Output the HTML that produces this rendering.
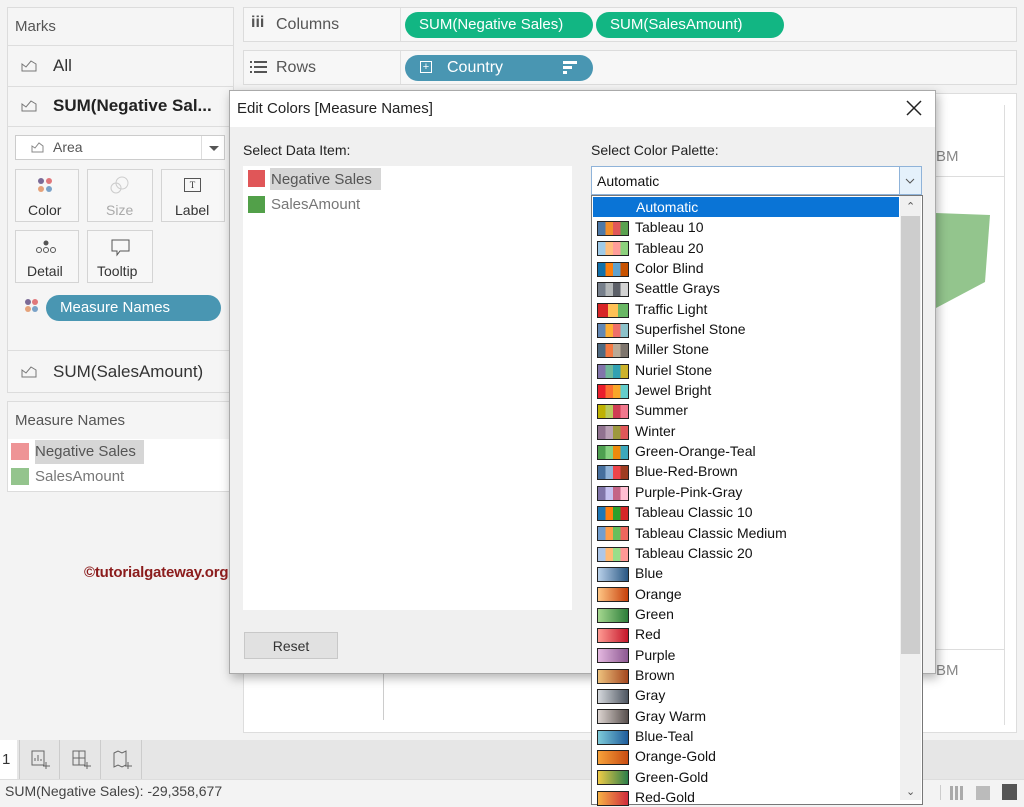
<!DOCTYPE html>
<html><head><meta charset="utf-8"><style>
*{box-sizing:border-box;margin:0;padding:0}
body{width:1024px;height:800px;overflow:hidden;background:#f3f3f3;font-family:"Liberation Sans",sans-serif;color:#333;position:relative}
.a{position:absolute}
.panel{background:#f5f5f5;border:1px solid #dcdcdc}
.pill{position:absolute;border-radius:13px;color:#fff;font-size:15px;line-height:26px;padding-left:14px}
.btn{position:absolute;background:#f7f7f7;border:1px solid #d4d4d4;text-align:center;font-size:14px;color:#333}
.sw{display:inline-block;width:32px;height:15px;border:1px solid #222;vertical-align:middle;margin:0 6px 0 4px}
.row{height:20.35px;line-height:20.35px;font-size:14px;color:#111;white-space:nowrap}
</style></head><body>
<div class="a panel" style="left:7px;top:7px;width:227px;height:386px"></div>
<div class="a" style="left:15px;top:18px;font-size:15px;color:#555">Marks</div>
<div class="a" style="left:7px;top:45px;width:227px;height:1px;background:#ddd"></div>
<div class="a" style="left:7px;top:86px;width:227px;height:1px;background:#ddd"></div>
<div class="a" style="left:7px;top:126px;width:227px;height:1px;background:#ddd"></div>
<div class="a" style="left:7px;top:350px;width:227px;height:1px;background:#ddd"></div>
<svg class="a" style="left:21px;top:58px" width="18" height="14"><path d="M1 13V6l4 3 5-6 5 3v7z" fill="none" stroke="#777"/></svg>
<div class="a" style="left:53px;top:56px;font-size:17px;color:#333">All</div>
<svg class="a" style="left:21px;top:98px" width="18" height="14"><path d="M1 13V6l4 3 5-6 5 3v7z" fill="none" stroke="#777"/></svg>
<div class="a" style="left:53px;top:96px;font-size:17px;font-weight:bold;color:#222">SUM(Negative Sal...</div>
<div class="a" style="left:15px;top:135px;width:210px;height:25px;background:#fff;border:1px solid #ccc"></div>
<svg class="a" style="left:31px;top:141px" width="14" height="12"><path d="M1 11V5l3 2 4-5 4 3v6z" fill="none" stroke="#888"/></svg>
<div class="a" style="left:53px;top:139px;font-size:14px;color:#555">Area</div>
<div class="a" style="left:201px;top:136px;width:1px;height:23px;background:#ddd"></div>
<div class="a" style="left:209px;top:146px;border:5px solid transparent;border-top-color:#555;border-bottom:0"></div>
<div class="btn" style="left:15px;top:169px;width:64px;height:53px"></div>
<div class="btn" style="left:87px;top:169px;width:66px;height:53px"></div>
<div class="btn" style="left:161px;top:169px;width:64px;height:53px"></div>
<div class="btn" style="left:15px;top:230px;width:64px;height:53px"></div>
<div class="btn" style="left:87px;top:230px;width:66px;height:53px"></div>
<svg class="a" style="left:37px;top:177px" width="18" height="18"><circle cx="4" cy="4" r="3" fill="#7b6a96"/><circle cx="12" cy="4" r="3" fill="#e0777b"/><circle cx="4" cy="12" r="3" fill="#e5a27a"/><circle cx="12" cy="12" r="3" fill="#7aa2c8"/></svg>
<div class="a" style="left:28px;top:202px;font-size:14px">Color</div>
<svg class="a" style="left:110px;top:176px" width="20" height="18"><circle cx="12" cy="7" r="6" fill="none" stroke="#ccc"/><circle cx="6" cy="12" r="5" fill="none" stroke="#ccc"/></svg>
<div class="a" style="left:106px;top:202px;font-size:14px;color:#aaa">Size</div>
<div class="a" style="left:184px;top:178px;width:17px;height:14px;border:1px solid #555;font-size:9px;text-align:center;line-height:12px;font-family:'Liberation Serif',serif">T</div>
<div class="a" style="left:175px;top:202px;font-size:14px">Label</div>
<svg class="a" style="left:35px;top:240px" width="22" height="14"><circle cx="11" cy="3" r="2.5" fill="#555"/><circle cx="4" cy="10" r="2.5" fill="none" stroke="#555"/><circle cx="11" cy="10" r="2.5" fill="none" stroke="#555"/><circle cx="18" cy="10" r="2.5" fill="none" stroke="#555"/></svg>
<div class="a" style="left:27px;top:263px;font-size:14px">Detail</div>
<svg class="a" style="left:111px;top:239px" width="20" height="18"><path d="M1 1h17v11H9l-3 4v-4H1z" fill="none" stroke="#555"/></svg>
<div class="a" style="left:97px;top:263px;font-size:14px">Tooltip</div>
<svg class="a" style="left:24px;top:298px" width="16" height="16"><circle cx="4" cy="4" r="3" fill="#7b6a96"/><circle cx="11" cy="4" r="3" fill="#e0777b"/><circle cx="4" cy="11" r="3" fill="#e5a27a"/><circle cx="11" cy="11" r="3" fill="#7aa2c8"/></svg>
<div class="pill" style="left:46px;top:295px;width:175px;background:#4996b2;font-size:15px">Measure Names</div>
<svg class="a" style="left:21px;top:364px" width="18" height="14"><path d="M1 13V6l4 3 5-6 5 3v7z" fill="none" stroke="#777"/></svg>
<div class="a" style="left:53px;top:362px;font-size:17px;color:#333">SUM(SalesAmount)</div>
<div class="a panel" style="left:7px;top:401px;width:227px;height:91px"></div>
<div class="a" style="left:15px;top:412px;font-size:15px;color:#555">Measure Names</div>
<div class="a" style="left:8px;top:439px;width:225px;height:52px;background:#fff"></div>
<div class="a" style="left:11px;top:443px;width:18px;height:17px;background:#ee9496"></div>
<div class="a" style="left:35px;top:440px;width:109px;height:24px;background:#d6d6d6"></div>
<div class="a" style="left:35px;top:443px;font-size:15px;color:#555">Negative Sales</div>
<div class="a" style="left:11px;top:468px;width:18px;height:17px;background:#94c48d"></div>
<div class="a" style="left:35px;top:468px;font-size:15px;color:#777">SalesAmount</div>
<div class="a panel" style="left:243px;top:7px;width:774px;height:35px;background:#f7f7f7"></div>
<div class="a" style="left:400px;top:8px;width:1px;height:33px;background:#e0e0e0"></div>
<div class="a" style="left:251px;top:14px;font-size:16px;font-weight:bold;color:#555">iii</div>
<div class="a" style="left:276px;top:16px;font-size:16px;color:#555">Columns</div>
<div class="pill" style="left:405px;top:12px;width:188px;background:#12b683;font-size:15px">SUM(Negative Sales)</div>
<div class="pill" style="left:596px;top:12px;width:188px;background:#12b683;font-size:15px">SUM(SalesAmount)</div>
<div class="a panel" style="left:243px;top:50px;width:774px;height:35px;background:#f7f7f7"></div>
<div class="a" style="left:400px;top:51px;width:1px;height:33px;background:#e0e0e0"></div>
<svg class="a" style="left:250px;top:60px" width="18" height="14"><g fill="#555"><rect x="0" y="1" width="2" height="2"/><rect x="0" y="6" width="2" height="2"/><rect x="0" y="11" width="2" height="2"/><rect x="4" y="1" width="13" height="2"/><rect x="4" y="6" width="13" height="2"/><rect x="4" y="11" width="13" height="2"/></g></svg>
<div class="a" style="left:276px;top:59px;font-size:16px;color:#555">Rows</div>
<div class="pill" style="left:405px;top:55px;width:188px;background:#4996b2;font-size:16px;padding-left:42px">Country</div>
<div class="a" style="left:420px;top:61px;width:12px;height:12px;border:1px solid #fff;color:#fff;font-size:11px;line-height:10px;text-align:center">+</div>
<svg class="a" style="left:563px;top:60px" width="16" height="16"><g fill="#fff"><rect x="0" y="1" width="14" height="3"/><rect x="0" y="6" width="9" height="3"/><rect x="0" y="11" width="4" height="3"/></g></svg>
<div class="a" style="left:243px;top:93px;width:774px;height:640px;background:#fff;border:1px solid #ddd"></div>
<div class="a" style="left:383px;top:650px;width:1px;height:70px;background:#ccc"></div>
<div class="a" style="left:1004px;top:105px;width:1px;height:620px;background:#ddd"></div>
<div class="a" style="left:936px;top:176px;width:68px;height:1px;background:#ddd"></div>
<div class="a" style="left:936px;top:649px;width:68px;height:1px;background:#ddd"></div>
<div class="a" style="left:936px;top:148px;font-size:15px;color:#888">BM</div>
<div class="a" style="left:936px;top:662px;font-size:15px;color:#888">BM</div>
<svg class="a" style="left:936px;top:210px" width="60" height="110"><path d="M0 3L54 5 49 72 0 98z" fill="#93c58d"/></svg>
<div class="a" style="left:0;top:740px;width:1024px;height:39px;background:#e6e6e6"></div>
<div class="a" style="left:0;top:740px;width:17px;height:39px;background:#fff;font-size:15px;line-height:39px;padding-left:2px">1</div>
<div class="a" style="left:19px;top:740px;width:1px;height:39px;background:#ccc"></div>
<div class="a" style="left:59px;top:740px;width:1px;height:39px;background:#ccc"></div>
<div class="a" style="left:100px;top:740px;width:1px;height:39px;background:#ccc"></div>
<div class="a" style="left:141px;top:740px;width:1px;height:39px;background:#ccc"></div>
<svg class="a" style="left:31px;top:750px" width="20" height="20"><path d="M1 1h12v14H1z M4 11V8M7 11V5M10 11V9" fill="none" stroke="#666"/><path d="M15 12v7M12 16h7" stroke="#666"/></svg>
<svg class="a" style="left:72px;top:750px" width="20" height="20"><path d="M1 1h12v14H1zM1 8h12M7 1v14" fill="none" stroke="#666"/><path d="M15 12v7M12 16h7" stroke="#666"/></svg>
<svg class="a" style="left:113px;top:750px" width="20" height="20"><path d="M1 3l4-2 4 2 4-2v14l-4 2-4-2-4 2z" fill="none" stroke="#666"/><path d="M15 12v7M12 16h7" stroke="#666"/></svg>
<div class="a" style="left:0;top:779px;width:1024px;height:21px;background:#f3f3f3;border-top:1px solid #ddd"></div>
<div class="a" style="left:5px;top:783px;font-size:14px;color:#444">SUM(Negative Sales): -29,358,677</div>
<div class="a" style="left:940px;top:785px;width:1px;height:15px;background:#ccc"></div>
<div class="a" style="left:950px;top:786px;width:14px;height:14px;background:repeating-linear-gradient(90deg,#aaa 0 3px,transparent 3px 5px)"></div>
<div class="a" style="left:976px;top:786px;width:14px;height:14px;background:#bbb"></div>
<div class="a" style="left:1002px;top:784px;width:15px;height:16px;background:#555"></div>
<div class="a" style="left:229px;top:90px;width:707px;height:584px;background:#f0f0f0;border:1px solid #aaa;box-shadow:2px 4px 10px rgba(0,0,0,.3)"></div>
<div class="a" style="left:230px;top:91px;width:705px;height:36px;background:#fff"></div>
<div class="a" style="left:237px;top:100px;font-size:15px;color:#222">Edit Colors [Measure Names]</div>
<svg class="a" style="left:906px;top:100px" width="16" height="16"><path d="M1 1l14 14M15 1L1 15" stroke="#222" stroke-width="1.5"/></svg>
<div class="a" style="left:243px;top:142px;font-size:14px;color:#222">Select Data Item:</div>
<div class="a" style="left:243px;top:166px;width:329px;height:444px;background:#fff"></div>
<div class="a" style="left:248px;top:170px;width:17px;height:17px;background:#e05658"></div>
<div class="a" style="left:270px;top:168px;width:111px;height:22px;background:#d6d6d6"></div>
<div class="a" style="left:271px;top:171px;font-size:15px;color:#555">Negative Sales</div>
<div class="a" style="left:248px;top:196px;width:17px;height:17px;background:#52a049"></div>
<div class="a" style="left:271px;top:196px;font-size:15px;color:#777">SalesAmount</div>
<div class="btn" style="left:244px;top:632px;width:94px;height:27px;background:#e1e1e1;border-color:#c8c8c8;line-height:26px">Reset</div>
<div class="a" style="left:84px;top:564px;font-size:15px;font-weight:bold;color:#8b1c1c;z-index:5;letter-spacing:-0.2px">©tutorialgateway.org</div>
<div class="a" style="left:591px;top:142px;font-size:14px;color:#222">Select Color Palette:</div>
<div class="a" style="left:591px;top:166px;width:331px;height:29px;background:#fff;border:1px solid #8fb3d9"></div>
<div class="a" style="left:597px;top:173px;font-size:14px;color:#111">Automatic</div>
<div class="a" style="left:899px;top:167px;width:22px;height:27px;background:#e5f1fb;border-left:1px solid #8fb3d9"></div>
<svg class="a" style="left:905px;top:177px" width="10" height="8"><path d="M1 2l4 4 4-4" fill="none" stroke="#555"/></svg>
<div class="a" style="left:591px;top:195px;width:332px;height:610px;background:#fff;border:1px solid #777"></div>
<div class="a" style="left:900px;top:196px;width:21px;height:604px;background:#f0f0f0"></div>
<div class="a" style="left:901px;top:216px;width:19px;height:438px;background:#cdcdcd"></div>
<div class="a" style="left:906px;top:200px;font-size:11px;color:#555">&#8963;</div>
<div class="a" style="left:906px;top:785px;font-size:11px;color:#555">&#8964;</div>
<div class="a" style="left:593px;top:197px;width:306px">
<div class="row" style="background:#0a74d6;color:#fff;padding-left:43px">Automatic</div>
<div class="row"><span class="sw" style="background:linear-gradient(90deg,#4e79a7 0 25%,#f28e2b 25% 50%,#e15759 50% 75%,#59a14f 75%)"></span>Tableau 10</div>
<div class="row"><span class="sw" style="background:linear-gradient(90deg,#a0cbe8 0 25%,#ffbe7d 25% 50%,#ff9d9a 50% 75%,#8cd17d 75%)"></span>Tableau 20</div>
<div class="row"><span class="sw" style="background:linear-gradient(90deg,#1170aa 0 25%,#fc7d0b 25% 50%,#5fa2ce 50% 75%,#c85200 75%)"></span>Color Blind</div>
<div class="row"><span class="sw" style="background:linear-gradient(90deg,#767f8b 0 25%,#b3b7b8 25% 50%,#5c6068 50% 75%,#d3d3d3 75%)"></span>Seattle Grays</div>
<div class="row"><span class="sw" style="background:linear-gradient(90deg,#d82526 0 33%,#ffc156 33% 66%,#69b764 66%)"></span>Traffic Light</div>
<div class="row"><span class="sw" style="background:linear-gradient(90deg,#6388b4 0 25%,#ffae34 25% 50%,#ef6f6a 50% 75%,#8cc2ca 75%)"></span>Superfishel Stone</div>
<div class="row"><span class="sw" style="background:linear-gradient(90deg,#4f6980 0 25%,#f47942 25% 50%,#b9aa97 50% 75%,#7e756d 75%)"></span>Miller Stone</div>
<div class="row"><span class="sw" style="background:linear-gradient(90deg,#8175aa 0 25%,#6fb899 25% 50%,#31a1b3 50% 75%,#ccb22b 75%)"></span>Nuriel Stone</div>
<div class="row"><span class="sw" style="background:linear-gradient(90deg,#eb1e2c 0 25%,#fd6f30 25% 50%,#f9a729 50% 75%,#64cdcc 75%)"></span>Jewel Bright</div>
<div class="row"><span class="sw" style="background:linear-gradient(90deg,#bfb202 0 25%,#b9ca5d 25% 50%,#cf3e53 50% 75%,#f1788d 75%)"></span>Summer</div>
<div class="row"><span class="sw" style="background:linear-gradient(90deg,#90728f 0 25%,#b9a0b4 25% 50%,#9d983d 50% 75%,#e15759 75%)"></span>Winter</div>
<div class="row"><span class="sw" style="background:linear-gradient(90deg,#4e9f50 0 25%,#87d180 25% 50%,#ef8a0c 50% 75%,#3ca8bc 75%)"></span>Green-Orange-Teal</div>
<div class="row"><span class="sw" style="background:linear-gradient(90deg,#466f9d 0 25%,#91b3d7 25% 50%,#ed444a 50% 75%,#9e3d22 75%)"></span>Blue-Red-Brown</div>
<div class="row"><span class="sw" style="background:linear-gradient(90deg,#8074a8 0 25%,#c6c1f0 25% 50%,#c46487 50% 75%,#ffbed1 75%)"></span>Purple-Pink-Gray</div>
<div class="row"><span class="sw" style="background:linear-gradient(90deg,#1f77b4 0 25%,#ff7f0e 25% 50%,#2ca02c 50% 75%,#d62728 75%)"></span>Tableau Classic 10</div>
<div class="row"><span class="sw" style="background:linear-gradient(90deg,#729ece 0 25%,#ff9e4a 25% 50%,#67bf5c 50% 75%,#ed665d 75%)"></span>Tableau Classic Medium</div>
<div class="row"><span class="sw" style="background:linear-gradient(90deg,#aec7e8 0 25%,#ffbb78 25% 50%,#98df8a 50% 75%,#ff9896 75%)"></span>Tableau Classic 20</div>
<div class="row"><span class="sw" style="background:linear-gradient(90deg,#b9d1ea,#2a5783)"></span>Blue</div>
<div class="row"><span class="sw" style="background:linear-gradient(90deg,#ffc685,#c6400b)"></span>Orange</div>
<div class="row"><span class="sw" style="background:linear-gradient(90deg,#a5d88f,#2d7d3a)"></span>Green</div>
<div class="row"><span class="sw" style="background:linear-gradient(90deg,#ff9b93,#c4162a)"></span>Red</div>
<div class="row"><span class="sw" style="background:linear-gradient(90deg,#e4b8e0,#8c5891)"></span>Purple</div>
<div class="row"><span class="sw" style="background:linear-gradient(90deg,#eec27e,#a4471f)"></span>Brown</div>
<div class="row"><span class="sw" style="background:linear-gradient(90deg,#d5d8dc,#4e5661)"></span>Gray</div>
<div class="row"><span class="sw" style="background:linear-gradient(90deg,#dcd4d0,#59504e)"></span>Gray Warm</div>
<div class="row"><span class="sw" style="background:linear-gradient(90deg,#7ecbd9,#1f5c9b)"></span>Blue-Teal</div>
<div class="row"><span class="sw" style="background:linear-gradient(90deg,#f7a23a,#c84c12)"></span>Orange-Gold</div>
<div class="row"><span class="sw" style="background:linear-gradient(90deg,#f0cb47,#2b7e49)"></span>Green-Gold</div>
<div class="row"><span class="sw" style="background:linear-gradient(90deg,#f6b145,#d02b3c)"></span>Red-Gold</div>
</div>
</body></html>
